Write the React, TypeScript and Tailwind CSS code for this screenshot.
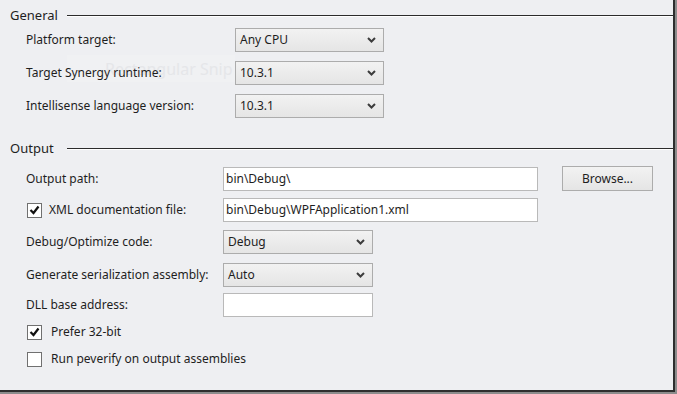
import React from "react";

function Chevron() {
  return (
    <svg width="9" height="6" viewBox="0 0 9 6" className="shrink-0">
      <path d="M1 1l3.5 3.5L8 1" fill="none" stroke="#3c3c3c" strokeWidth="2" />
    </svg>
  );
}

function Select({ value, width }: { value: string; width: string }) {
  return (
    <div
      className={`${width} h-[24px] flex items-center justify-between pl-[4px] pr-[7px] border border-[#acacac] bg-gradient-to-b from-[#f2f2f2] to-[#e5e5e5] text-[#1e1e1e]`}
    >
      <span>{value}</span>
      <Chevron />
    </div>
  );
}

function TextBox({ value, width }: { value?: string; width: string }) {
  return (
    <div className={`${width} h-[24px] flex items-center px-[2px] border border-[#b9b9b9] bg-white text-[#1e1e1e]`}>
      {value}
    </div>
  );
}

function CheckBox({ checked }: { checked: boolean }) {
  return (
    <div className="w-[15px] h-[15px] border border-[#707070] bg-white flex items-center justify-center shrink-0">
      {checked && (
        <svg width="11" height="10" viewBox="0 0 11 10">
          <path d="M1.5 5l3 3L9.5 1.5" fill="none" stroke="#111" strokeWidth="2.2" />
        </svg>
      )}
    </div>
  );
}

function Header({ title }: { title: string }) {
  return (
    <div className="flex items-center pl-[10px] h-[16px] leading-[16px] text-[13px] text-[#1e1e1e]">
      <span className="w-[57px]">{title}</span>
      <div className="flex-1 border-t-[1.5px] border-[#2b2b2b] shadow-[0_1px_0_#ffffff]" />
    </div>
  );
}

export default function App() {
  return (
    <div className="w-[677px] h-[394px] bg-[#8c8c8c]">
      <div
        className="relative w-[675px] h-[392px] bg-[#eeeff2] border-r-2 border-b-2 border-[#2e2e2e] text-[12px] text-[#1e1e1e]"
        style={{ fontFamily: '"Noto Sans", "Liberation Sans", sans-serif' }}
      >
        {/* faint snipping tool ghost, behind the form */}
        <div className="absolute z-0 left-[67px] top-[55px] w-[168px] h-[27px] bg-[#f0f1f3] flex items-center pl-[38px] text-[16px] text-[#e5e6e9] pointer-events-none">
          Rectangular Snip
        </div>

        <div className="relative z-10">
          {/* General */}
          <div className="pt-[7px]">
            <Header title="General" />
          </div>
          <div className="flex flex-col gap-[9px] mt-[5px]">
            <div className="flex items-center h-[24px]">
              <span className="w-[235px] pl-[26px]">Platform target:</span>
              <Select value="Any CPU" width="w-[149px]" />
            </div>
            <div className="flex items-center h-[24px]">
              <span className="w-[235px] pl-[26px]">Target Synergy runtime:</span>
              <Select value="10.3.1" width="w-[149px]" />
            </div>
            <div className="flex items-center h-[24px]">
              <span className="w-[235px] pl-[26px]">Intellisense language version:</span>
              <Select value="10.3.1" width="w-[149px]" />
            </div>
          </div>

          {/* Output */}
          <div className="pt-[22px]">
            <Header title="Output" />
          </div>
          <div className="flex flex-col mt-[10px]">
            <div className="flex items-center h-[25px]">
              <span className="w-[223px] pl-[26px]">Output path:</span>
              <TextBox value="bin\Debug\" width="w-[315px]" />
              <button className="ml-[24px] w-[91px] h-[25px] border border-[#acacac] bg-gradient-to-b from-[#f2f2f2] to-[#e5e5e5] text-[#1e1e1e]">
                Browse...
              </button>
            </div>
            <div className="flex items-center h-[24px] mt-[7px]">
              <div className="w-[223px] pl-[27px] flex items-center gap-[7px]">
                <CheckBox checked />
                <span>XML documentation file:</span>
              </div>
              <TextBox value="bin\Debug\WPFApplication1.xml" width="w-[315px]" />
            </div>
            <div className="flex items-center h-[25px] mt-[7px]">
              <span className="w-[223px] pl-[26px]">Debug/Optimize code:</span>
              <Select value="Debug" width="w-[150px]" />
            </div>
            <div className="flex items-center h-[25px] mt-[8px]">
              <span className="w-[223px] pl-[26px]">Generate serialization assembly:</span>
              <Select value="Auto" width="w-[150px]" />
            </div>
            <div className="flex items-center h-[24px] mt-[6px]">
              <span className="w-[223px] pl-[26px]">DLL base address:</span>
              <TextBox width="w-[150px]" />
            </div>
            <div className="flex items-center h-[16px] mt-[7px] pl-[27px] gap-[9px]">
              <CheckBox checked />
              <span>Prefer 32-bit</span>
            </div>
            <div className="flex items-center h-[16px] mt-[11px] pl-[27px] gap-[9px]">
              <CheckBox checked={false} />
              <span>Run peverify on output assemblies</span>
            </div>
          </div>
        </div>
      </div>
    </div>
  );
}
